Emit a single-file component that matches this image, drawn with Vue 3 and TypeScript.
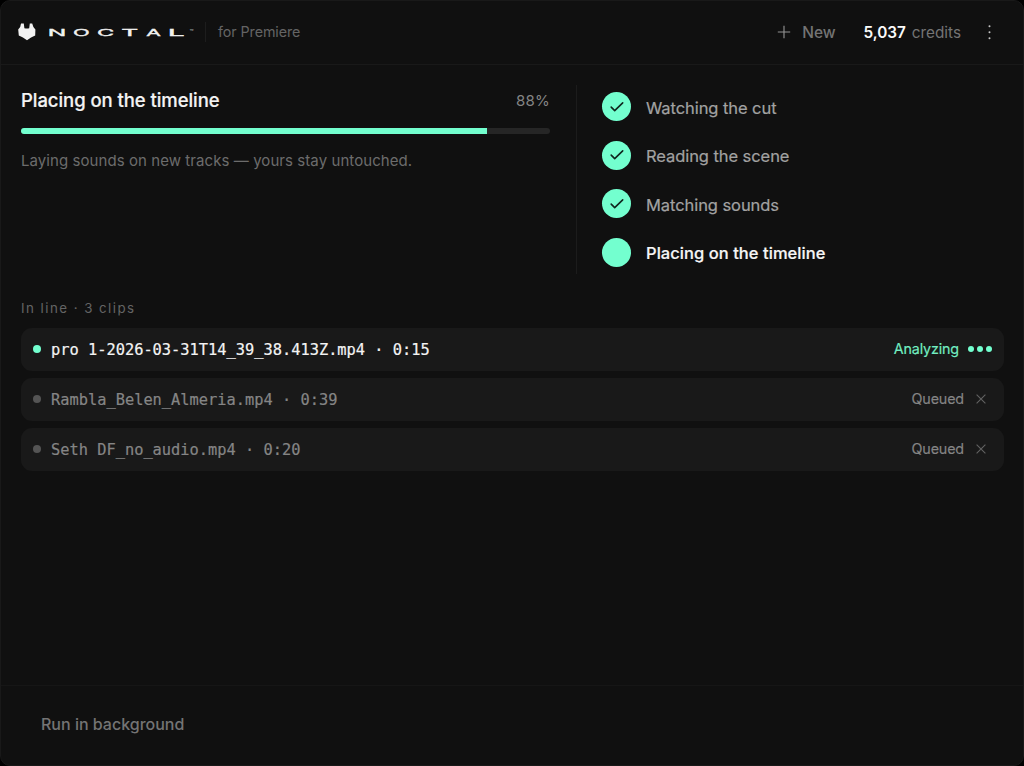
<script setup lang="ts">
interface Step { label: string; done: boolean }
interface Clip { name: string; length: string; active: boolean }
interface Letter { char: string; x: number; width: number }

const letters: Letter[] = [
  { char: 'N', x: -1.4, width: 18.6 },
  { char: 'O', x: 24, width: 16.7 },
  { char: 'C', x: 48, width: 17.2 },
  { char: 'T', x: 72.3, width: 17 },
  { char: 'A', x: 97.3, width: 14.6 },
  { char: 'L', x: 118.7, width: 17 },
]
const progress = 88
const steps: Step[] = [
  { label: 'Watching the cut', done: true },
  { label: 'Reading the scene', done: true },
  { label: 'Matching sounds', done: true },
  { label: 'Placing on the timeline', done: false },
]
const clips: Clip[] = [
  { name: 'pro 1-2026-03-31T14_39_38.413Z.mp4', length: '0:15', active: true },
  { name: 'Rambla_Belen_Almeria.mp4', length: '0:39', active: false },
  { name: 'Seth DF_no_audio.mp4', length: '0:20', active: false },
]
</script>

<template>
  <div class="panel">
    <header class="header">
      <svg class="mark" width="18" height="18" viewBox="0 0 18 18" aria-hidden="true">
        <path d="M3 0.6 L5.8 0.6 L6.4 5.2 Q9 5.8 11.2 5.2 L11.8 0.6 L14.2 0.6 Q14.8 4.2 17.4 6.4 L17.2 12.4 Q13 13.8 9 17.2 Q5 13.8 0.8 12.4 L0.2 6.6 Q2.8 4.6 3 0.6 Z" fill="#f2f2f2" />
      </svg>
      <svg class="wordmark" width="148" height="12" viewBox="0 0 148 12" aria-label="Noctal">
        <text class="letters" y="10.2"><tspan v-for="l in letters" :key="l.char" :x="l.x" :textLength="l.width" lengthAdjust="spacingAndGlyphs">{{ l.char }}</tspan></text>
        <text class="tm" x="140.5" y="7.6">™</text>
      </svg>
      <span class="rule"></span>
      <span class="host">for Premiere</span>
      <button class="new">
        <svg width="14" height="14" viewBox="0 0 14 14"><path d="M7 0.8V13.2M0.8 7H13.2" stroke="#929292" stroke-width="1.15" /></svg>
        <span>New</span>
      </button>
      <span class="credits"><b>5,037</b><span>credits</span></span>
      <svg class="menu" width="4" height="16" viewBox="0 0 4 16" fill="#c4c4c4">
        <circle cx="1.5" cy="2.3" r="1" /><circle cx="1.5" cy="8.3" r="1" /><circle cx="1.5" cy="14.3" r="1" />
      </svg>
    </header>

    <section class="status">
      <div class="task">
        <div class="heading">
          <h1>Placing on the timeline</h1>
          <span class="percent">{{ progress }}%</span>
        </div>
        <div class="track"><div class="fill" :style="{ width: progress + '%' }"></div></div>
        <p class="note">Laying sounds on new tracks — yours stay untouched.</p>
      </div>
      <ul class="steps">
        <li v-for="step in steps" :key="step.label" :class="{ current: !step.done }">
          <span class="bullet">
            <svg v-if="step.done" width="14" height="12" viewBox="0 0 14 12"><path d="M1.2 6.1L4.7 9.6L12.7 1.9" fill="none" stroke="#10271f" stroke-width="1.6" stroke-linecap="round" stroke-linejoin="round" /></svg>
          </span>
          <span class="label">{{ step.label }}</span>
        </li>
      </ul>
    </section>

    <section class="queue">
      <h2>In line · {{ clips.length }} clips</h2>
      <div v-for="clip in clips" :key="clip.name" class="clip" :class="{ active: clip.active }">
        <i class="dot"></i>
        <span class="name">{{ clip.name }} · {{ clip.length }}</span>
        <span class="state">{{ clip.active ? 'Analyzing' : 'Queued' }}</span>
        <span v-if="clip.active" class="dots"><i></i><i></i><i></i></span>
        <svg v-else class="remove" width="10" height="10" viewBox="0 0 10 10"><path d="M0.6 0.6L9.4 9.4M9.4 0.6L0.6 9.4" stroke="#626262" stroke-width="1.1" /></svg>
      </div>
    </section>

    <footer class="footer"><button>Run in background</button></footer>
  </div>
</template>

<style>
html, body { margin: 0; background: #000; overflow: hidden; }
</style>

<style scoped>
* { box-sizing: border-box; }
.panel {
  display: flex;
  flex-direction: column;
  width: 1024px;
  height: 766px;
  background: #101010;
  border: 1px solid #191919;
  border-radius: 10px;
  overflow: hidden;
  font-family: Inter, "Liberation Sans", sans-serif;
  color: #f4f4f4;
}
button { padding: 0; border: 0; background: none; font: inherit; color: inherit; }
.header {
  display: flex;
  align-items: center;
  flex: none;
  height: 64px;
  padding: 0 31px 2px 17px;
  border-bottom: 1px solid #191919;
}
.mark { flex: none; margin-right: 13px; }
.wordmark { flex: none; overflow: visible; }
.letters { font-size: 9.2px; font-weight: 400; fill: #f2f2f2; stroke: #f2f2f2; stroke-width: 0.3px; }
.tm { font-size: 6.5px; fill: #bbb; }
.rule { width: 1px; height: 20px; margin-left: 8px; background: #1d1d1d; }
.host { margin-left: 12px; font-size: 14.3px; color: #646464; letter-spacing: -0.08px; }
.new { display: flex; align-items: center; gap: 11px; margin-left: auto; padding-top: 1px; font-size: 15.5px; font-weight: 500; letter-spacing: -0.1px; color: #747474; }
.credits { display: flex; gap: 6px; margin-left: 28px; padding-top: 1px; font-size: 15.3px; color: #747474; }
.credits b { font-weight: 600; color: #fafafa; }
.menu { margin-left: 27px; }
.status { display: flex; flex: none; height: 189px; margin: 20px 19px 0; }
.task { width: 557px; padding-right: 26px; border-right: 1px solid #1c1c1c; padding-left: 1px; }
.heading { display: flex; justify-content: space-between; align-items: center; height: 31px; }
h1 { margin: 0 0 2px; font-size: 18.5px; font-weight: 500; letter-spacing: -0.06px; -webkit-text-stroke: 0.2px; }
.percent { font-size: 15px; color: #858585; letter-spacing: 0.2px; }
.track { height: 6px; margin-top: 12px; border-radius: 3px; background: #262626; overflow: hidden; }
.fill { height: 100%; background: #73ffcf; }
.note { margin: 15px 0 0; font-size: 15px; line-height: 24px; color: #6c6c6c; letter-spacing: 0.07px; }
.steps { display: flex; flex-direction: column; gap: 19.7px; margin: 0; padding: 7.5px 0 0 25px; list-style: none; }
.steps li { display: flex; align-items: center; gap: 15px; height: 28.8px; color: #a2a2a2; font-size: 16.5px; letter-spacing: -0.07px; -webkit-text-stroke: 0.2px; }
.steps .current { color: #f6f6f6; font-weight: 500; letter-spacing: 0.05px; }
.bullet { display: flex; align-items: center; justify-content: center; width: 29px; height: 29px; border-radius: 50%; background: #73ffcf; }
.label { padding-top: 2px; }
.queue { display: flex; flex-direction: column; gap: 7px; padding: 0 19px 0 20px; }
h2 { margin: 24px 0 3px; font-size: 13.3px; line-height: 20px; font-weight: 400; letter-spacing: 1.46px; color: #646464; }
.clip { display: flex; align-items: center; height: 43px; padding: 0 12px 1px; border-radius: 11px; background: #191919; color: #858585; }
.dot { width: 8px; height: 8px; margin-right: 10px; border-radius: 50%; background: #545454; }
.name { padding-top: 1px; font-family: "DejaVu Sans Mono", monospace; font-size: 15.35px; -webkit-text-stroke: 0.2px; }
.state { margin-left: auto; padding-bottom: 1px; font-size: 14.3px; letter-spacing: -0.14px; -webkit-text-stroke: 0.15px; }
.remove { margin: 0 6px 0 12px; }
.active .dot { background: #73ffcf; }
.active .name { color: #f4f4f4; }
.active .state { color: #73eec2; }
.dots { display: flex; gap: 3px; margin-left: 9px; }
.dots i { width: 6px; height: 6px; border-radius: 50%; background: #73ffcf; }
.footer { flex: none; height: 80px; margin-top: auto; padding: 28px 40px; border-top: 1px solid #161616; font-size: 16px; font-weight: 500; letter-spacing: -0.03px; color: #747474; }
</style>
